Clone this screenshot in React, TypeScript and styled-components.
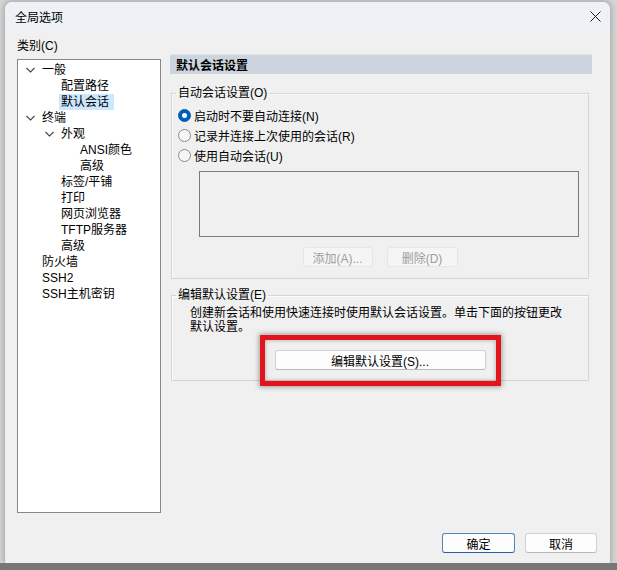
import React from 'react';
import styled, {createGlobalStyle} from 'styled-components';

const GlobalStyle = createGlobalStyle`
  html, body {
    margin: 0;
    padding: 0;
  }
  body {
    font-family: "Liberation Sans", "Noto Sans CJK SC", sans-serif;
    font-size: 12px;
    color: #000;
  }
`;

const Backdrop = styled.div`
  width: 617px;
  height: 570px;
  display: flex;
  flex-direction: column;
  background: #d6d6d6;
  overflow: hidden;
`;

const DialogRow = styled.div`
  flex: 1;
  padding: 1px 6px 0 4px;
  display: flex;
`;

const Taskbar = styled.div`
  height: 7px;
  background: #777;
`;

const Dialog = styled.div`
  flex: 1;
  display: flex;
  flex-direction: column;
  background: #f0f0f0;
  border: 1px solid #b9b9b9;
  border-bottom: none;
  border-radius: 8px 8px 0 0;
  box-shadow: 0 0 6px rgba(0, 0, 0, 0.25);
  overflow: hidden;
`;

const TitleBar = styled.div`
  height: 28px;
  display: flex;
  align-items: center;
  justify-content: space-between;
  padding-left: 10px;
  padding-bottom: 1px;
  background: #eef2f7;
`;

const Title = styled.span`
  font-size: 12px;
`;

const CloseButton = styled.div`
  width: 30px;
  height: 28px;
  display: flex;
  align-items: center;
  justify-content: center;
`;

const Body = styled.div`
  flex: 1;
  display: flex;
  flex-direction: column;
`;

const Columns = styled.div`
  display: flex;
`;

const LeftColumn = styled.div`
  padding: 7px 0 0 12px;
  display: flex;
  flex-direction: column;
`;

const FieldLabel = styled.div`
  line-height: 16px;
  margin-bottom: 5px;
`;

const Tree = styled.div`
  width: 142px;
  height: 450px;
  background: #fff;
  border: 1px solid #828790;
  padding-top: 2px;
  box-sizing: content-box;
`;

const TreeRow = styled.div<{$level: number}>`
  display: flex;
  align-items: center;
  height: 16px;
  padding-left: ${({$level}) => 4 + $level * 19}px;
  white-space: nowrap;
`;

const Expander = styled.span`
  width: 16px;
  margin-right: 4px;
  display: flex;
  align-items: center;
  justify-content: center;
`;

const TreeText = styled.span<{$selected?: boolean}>`
  line-height: 16px;
  padding: 0 5px 0 2px;
  margin-left: -2px;
  background: ${({$selected}) => ($selected ? '#cce8ff' : 'transparent')};
`;

const RightColumn = styled.div`
  width: 422px;
  margin-left: 9px;
  padding-top: 23px;
`;

const PageHeader = styled.div`
  height: 20px;
  display: flex;
  align-items: center;
  padding-left: 6px;
  font-weight: 700;
  background: linear-gradient(#dfe6ed 0, #dfe6ed 1px, #ccd5de 1px);
`;

const Group = styled.fieldset<{$gap: number}>`
  margin: ${({$gap}) => $gap}px 0 0 1px;
  width: 418px;
  box-sizing: border-box;
  border: 1px solid #d5d5d5;
  box-shadow: inset 1px 1px 0 #fbfbfb;
  padding: 0;
`;

const Legend = styled.legend`
  margin-left: 4px;
  padding: 0 2px;
  line-height: 16px;
`;

const GroupBody = styled.div<{$top: number; $bottom: number}>`
  padding: ${({$top, $bottom}) => `${$top}px 0 ${$bottom}px`};
`;

const RadioRow = styled.label`
  display: flex;
  align-items: center;
  height: 20px;
  padding-left: 6px;
  gap: 3px;
`;

const RadioMark = styled.span<{$checked?: boolean}>`
  width: 13px;
  height: 13px;
  box-sizing: border-box;
  border-radius: 50%;
  display: flex;
  align-items: center;
  justify-content: center;
  background: ${({$checked}) => ($checked ? '#005fb8' : '#f6f6f6')};
  border: 1px solid ${({$checked}) => ($checked ? '#005fb8' : '#8a8a8a')};

  &::after {
    content: '';
    display: ${({$checked}) => ($checked ? 'block' : 'none')};
    width: 5px;
    height: 5px;
    border-radius: 50%;
    background: #fff;
  }
`;

const SessionList = styled.div`
  margin: 6px 0 0 27px;
  width: 380px;
  height: 66px;
  box-sizing: border-box;
  border: 1px solid #7a7a7a;
  background: #f0f0f0;
`;

const ButtonRow = styled.div`
  margin-top: 10px;
  display: flex;
  justify-content: center;
  gap: 14px;
`;

const Button = styled.button<{$width: number; $primary?: boolean}>`
  width: ${({$width}) => $width}px;
  height: 20px;
  padding: 0;
  font: inherit;
  color: #000;
  background: #fdfdfd;
  border: 1px solid ${({$primary}) => ($primary ? '#4f86c0' : '#d0d0d0')};
  border-bottom-color: ${({$primary}) => ($primary ? '#1f5fa8' : '#b8b8b8')};
  border-radius: 3px;

  &:disabled {
    color: #9d9d9d;
    background: #f5f5f5;
    border-color: #e6e6e6;
  }
`;

const Description = styled.p`
  margin: 0;
  padding-left: 18px;
  width: 378px;
  line-height: 14px;
`;

const Highlight = styled.div`
  width: fit-content;
  margin: -15px auto -16px;
  padding: 10px 10px 11px;
  border: 5px solid #e3141b;
  box-shadow: 0 0 5px 1px rgba(0, 0, 0, 0.35), inset 0 0 4px rgba(0, 0, 0, 0.3);
`;

const EditSpacer = styled.div`
  margin-top: 16px;
`;

const Footer = styled.div`
  margin-top: auto;
  display: flex;
  justify-content: flex-end;
  gap: 10px;
  padding: 0 13px 10px 0;
`;

type TreeItem = {
  label: string;
  level: number;
  open?: boolean;
  selected?: boolean;
};

const treeItems: TreeItem[] = [
  {label: '一般', level: 0, open: true},
  {label: '配置路径', level: 1},
  {label: '默认会话', level: 1, selected: true},
  {label: '终端', level: 0, open: true},
  {label: '外观', level: 1, open: true},
  {label: 'ANSI颜色', level: 2},
  {label: '高级', level: 2},
  {label: '标签/平铺', level: 1},
  {label: '打印', level: 1},
  {label: '网页浏览器', level: 1},
  {label: 'TFTP服务器', level: 1},
  {label: '高级', level: 1},
  {label: '防火墙', level: 0},
  {label: 'SSH2', level: 0},
  {label: 'SSH主机密钥', level: 0},
];

const Chevron = () => (
  <svg width="9" height="6" viewBox="0 0 9 6">
    <polyline points="0.5,1 4.5,5 8.5,1" fill="none" stroke="#444" strokeWidth="1.1" />
  </svg>
);

const CloseIcon = () => (
  <svg width="11" height="11" viewBox="0 0 11 11">
    <path d="M0.5 0.5 L10.5 10.5 M10.5 0.5 L0.5 10.5" stroke="#1a1a1a" strokeWidth="1" />
  </svg>
);

export default function App() {
  return (
    <Backdrop>
      <GlobalStyle />
      <DialogRow>
        <Dialog>
          <TitleBar>
            <Title>全局选项</Title>
            <CloseButton>
              <CloseIcon />
            </CloseButton>
          </TitleBar>

          <Body>
            <Columns>
              <LeftColumn>
                <FieldLabel>类别(C)</FieldLabel>
                <Tree>
                  {treeItems.map((item, i) => (
                    <TreeRow key={i} $level={item.level}>
                      <Expander>{item.open && <Chevron />}</Expander>
                      <TreeText $selected={item.selected}>{item.label}</TreeText>
                    </TreeRow>
                  ))}
                </Tree>
              </LeftColumn>

              <RightColumn>
                <PageHeader>默认会话设置</PageHeader>

                <Group $gap={11}>
                  <Legend>自动会话设置(O)</Legend>
                  <GroupBody $top={4} $bottom={11}>
                    <RadioRow>
                      <RadioMark $checked />
                      启动时不要自动连接(N)
                    </RadioRow>
                    <RadioRow>
                      <RadioMark />
                      记录并连接上次使用的会话(R)
                    </RadioRow>
                    <RadioRow>
                      <RadioMark />
                      使用自动会话(U)
                    </RadioRow>
                    <SessionList />
                    <ButtonRow>
                      <Button $width={70} disabled>
                        添加(A)...
                      </Button>
                      <Button $width={71} disabled>
                        删除(D)
                      </Button>
                    </ButtonRow>
                  </GroupBody>
                </Group>

                <Group $gap={8}>
                  <Legend>编辑默认设置(E)</Legend>
                  <GroupBody $top={3} $bottom={10}>
                    <Description>
                      创建新会话和使用快速连接时使用默认会话设置。单击下面的按钮更改默认设置。
                    </Description>
                    <EditSpacer>
                      <Highlight>
                        <Button $width={211}>编辑默认设置(S)...</Button>
                      </Highlight>
                    </EditSpacer>
                  </GroupBody>
                </Group>
              </RightColumn>
            </Columns>

            <Footer>
              <Button $width={73} $primary>
                确定
              </Button>
              <Button $width={72}>取消</Button>
            </Footer>
          </Body>
        </Dialog>
      </DialogRow>
      <Taskbar />
    </Backdrop>
  );
}
